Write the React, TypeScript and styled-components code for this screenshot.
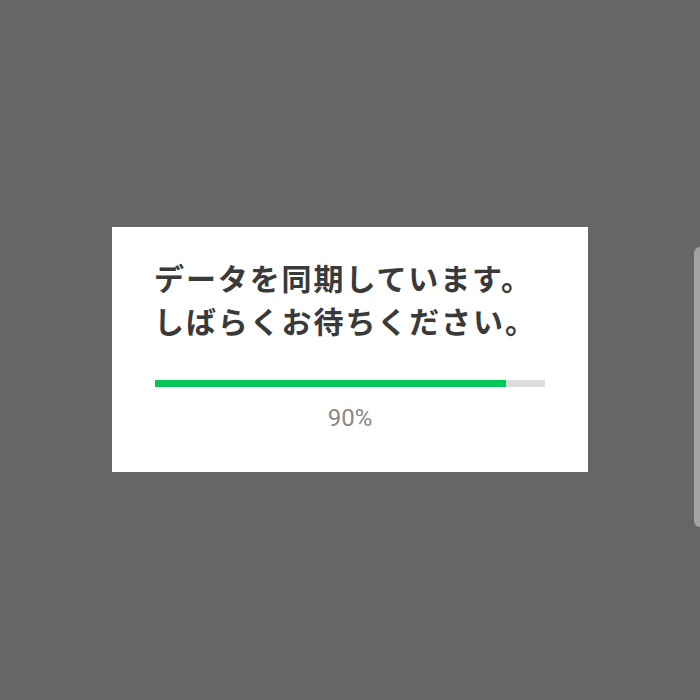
import React from "react";
import styled, { createGlobalStyle } from "styled-components";

const Global = createGlobalStyle`
  html, body { margin: 0; padding: 0; }
  body { background: #666666; }
`;

const Screen = styled.div`
  width: 700px;
  height: 700px;
  background: #666666;
  display: flex;
  align-items: center;
  justify-content: center;
  position: relative;
  overflow: hidden;
`;

const Dialog = styled.div`
  width: 476px;
  height: 245px;
  box-sizing: border-box;
  background: #ffffff;
  padding: 29px 43px 0 43px;
  margin-top: -1px;
  display: flex;
  flex-direction: column;
`;

const Message = styled.div`
  font-family: "Noto Sans CJK JP", "Noto Sans", sans-serif;
  font-weight: 700;
  font-size: 30px;
  line-height: 43px;
  color: #3a3a3a;
  letter-spacing: 1.9px;
  margin-left: -1px;
  white-space: nowrap;
`;

const Track = styled.div`
  margin-top: 38px;
  width: 390px;
  height: 7px;
  background: #dcdcdc;
`;

const Fill = styled.div`
  height: 100%;
  background: #06c755;
`;

const Percent = styled.div`
  margin-top: 16px;
  text-align: center;
  width: 390px;
  font-family: Roboto, "Open Sans", sans-serif;
  font-size: 24px;
  line-height: 30px;
  color: #888888;
`;

const EdgeTab = styled.div`
  position: absolute;
  right: 0;
  top: 247px;
  width: 6px;
  height: 280px;
  background: #a2a2a2;
  border-radius: 6px 0 0 6px;
`;

export default function App() {
  const progress = 90;
  return (
    <>
      <Global />
      <Screen>
        <Dialog>
          <Message>
            データを同期しています。
            <br />
            しばらくお待ちください。
          </Message>
          <Track>
            <Fill style={{ width: `${progress}%` }} />
          </Track>
          <Percent>{progress}%</Percent>
        </Dialog>
        <EdgeTab />
      </Screen>
    </>
  );
}
